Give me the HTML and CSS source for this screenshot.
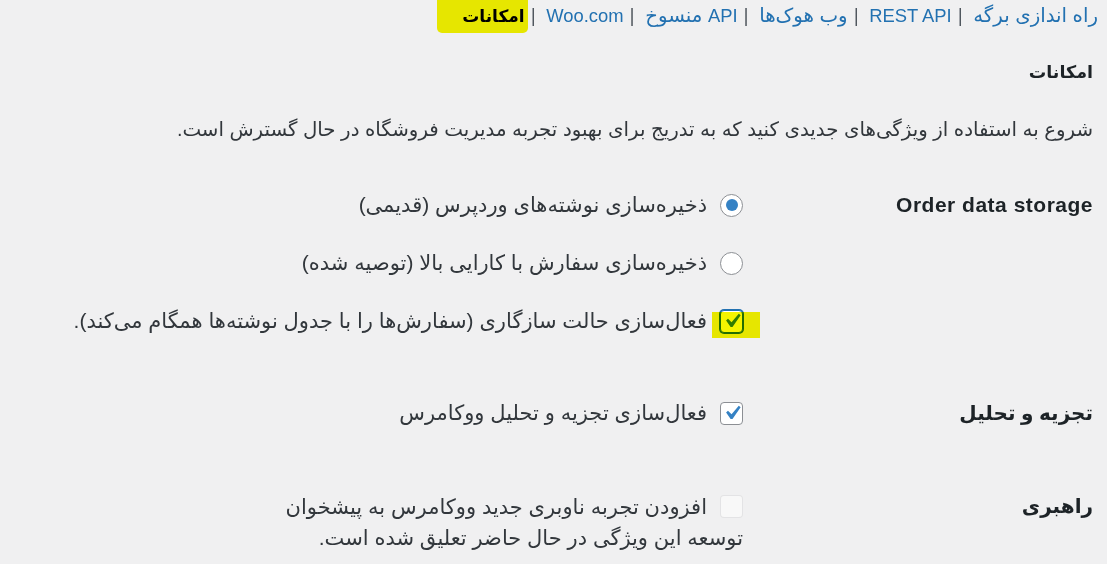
FILE: index.html
```html
<!DOCTYPE html>
<html lang="fa" dir="rtl">
<head>
<meta charset="utf-8">
<title>امکانات</title>
<link rel="stylesheet" href="styles.css">
</head>
<body>
<div class="wrap">
  <ul class="subsubsub">
    <li><a href="#">راه اندازی برگه</a><span class="sep">|</span></li>
    <li><a href="#"><span class="en">REST API</span></a><span class="sep">|</span></li>
    <li><a href="#">وب هوک‌ها</a><span class="sep">|</span></li>
    <li><a href="#"><span class="en">API</span> منسوخ</a><span class="sep">|</span></li>
    <li><a href="#"><span class="en">Woo.com</span></a><span class="sep">|</span></li>
    <li class="current-item"><a href="#" class="current">امکانات</a><span class="marker marker-top"></span></li>
  </ul>

  <h2 class="title">امکانات</h2>
  <p class="intro">شروع به استفاده از ویژگی‌های جدیدی کنید که به تدریج برای بهبود تجربه مدیریت فروشگاه در حال گسترش است.</p>

  <div class="form-table">
    <div class="row row-storage">
      <div class="th th-latin">Order data storage</div>
      <div class="td options">
        <label class="opt"><span class="ctrl radio checked"></span><span class="opt-text">ذخیره‌سازی نوشته‌های وردپرس (قدیمی)</span></label>
        <label class="opt"><span class="ctrl radio"></span><span class="opt-text">ذخیره‌سازی سفارش با کارایی بالا (توصیه شده)</span></label>
        <label class="opt"><span class="ctrl-wrap"><span class="ctrl checkbox checked focused"><svg viewBox="0 0 20 20" class="check"><path d="M14.83 4.89l1.34.94-5.81 8.38H9.02L5.78 9.67l1.34-1.25 2.57 2.4z"/></svg></span><span class="marker marker-check"></span></span><span class="opt-text">فعال‌سازی حالت سازگاری (سفارش‌ها را با جدول نوشته‌ها همگام می‌کند).</span></label>
      </div>
    </div>

    <div class="row row-analytics">
      <div class="th">تجزیه و تحلیل</div>
      <div class="td options">
        <label class="opt"><span class="ctrl checkbox checked"><svg viewBox="0 0 20 20" class="check"><path d="M14.83 4.89l1.34.94-5.81 8.38H9.02L5.78 9.67l1.34-1.25 2.57 2.4z"/></svg></span><span class="opt-text">فعال‌سازی تجزیه و تحلیل ووکامرس</span></label>
      </div>
    </div>

    <div class="row row-nav">
      <div class="th">راهبری</div>
      <div class="td">
        <label class="opt opt-nav"><span class="ctrl checkbox disabled"></span><span class="opt-text">افزودن تجربه ناوبری جدید ووکامرس به پیشخوان</span></label>
        <div class="note">توسعه این ویژگی در حال حاضر تعلیق شده است.</div>
      </div>
    </div>
  </div>
</div>
</body>
</html>
```

FILE: styles.css
```css
* { box-sizing: border-box; }

html, body {
  margin: 0;
  padding: 0;
}

body {
  width: 1107px;
  height: 564px;
  overflow: hidden;
  background: #f0f0f1;
  color: #32373c;
  font-family: "Liberation Sans", "DejaVu Sans", sans-serif;
  font-size: 19.8px;
  direction: rtl;
}

.wrap {
  padding: 0 14px 0 0;
}

.en {
  font-size: 18.4px;
}

/* top sub navigation */
.subsubsub {
  list-style: none;
  margin: 0 -5px 0 0;
  padding: 0;
  height: 30px;
  line-height: 30px;
  font-size: 19.8px;
  color: #50575e;
  white-space: nowrap;
}

.subsubsub li {
  display: inline;
}

.subsubsub a {
  color: #2271b1;
  text-decoration: none;
}

.sep {
  display: inline-block;
  margin: 0 10px 0 0;
  font-family: "DejaVu Sans", sans-serif;
  font-size: 18px;
}

.subsubsub a.current {
  color: #000;
  font-weight: bold;
  font-size: 17px;
}

.current-item {
  position: relative;
}

.marker {
  position: absolute;
  background: #f5f500;
  mix-blend-mode: multiply;
  pointer-events: none;
}

.marker-top {
  right: -3px;
  left: -25px;
  top: -6px;
  bottom: -7px;
  border-radius: 2px 2px 5px 5px;
}

/* heading + intro */
.title {
  margin: 27px 0 0;
  font-size: 17.5px;
  line-height: 30px;
  font-weight: bold;
  color: #1d2327;
}

.intro {
  margin: 27px 0 0;
  line-height: 30px;
}

/* settings table */
.form-table {
  margin-top: 46px;
}

.row {
  display: flex;
  align-items: flex-start;
}

.row-analytics {
  margin-top: 62px;
}

.row-nav {
  margin-top: 63px;
}

.th {
  width: 350px;
  flex: none;
  line-height: 30px;
  font-size: 20px;
  font-weight: bold;
  color: #1d2327;
}

.th-latin {
  font-size: 21px;
  letter-spacing: 0.5px;
}

.td {
  flex: 1;
  min-width: 0;
  font-size: 21px;
}

.options {
  display: flex;
  flex-direction: column;
  gap: 28px;
}

.opt {
  display: flex;
  align-items: center;
  gap: 13px;
  height: 30px;
  white-space: nowrap;
}

.ctrl {
  flex: none;
  width: 23px;
  height: 23px;
  border: 1px solid #8c8f94;
  background: #fff;
  display: flex;
  align-items: center;
  justify-content: center;
}

.radio {
  border-radius: 50%;
}

.radio.checked::before {
  content: "";
  width: 12px;
  height: 12px;
  border-radius: 50%;
  background: #3582c4;
}

.checkbox {
  border-radius: 4px;
}

.check {
  width: 28px;
  height: 28px;
  fill: #3582c4;
  flex: none;
  margin: -2px;
}

.checkbox.focused {
  border-color: #2271b1;
  box-shadow: 0 0 0 1px #2271b1;
}

.ctrl-wrap {
  position: relative;
  display: flex;
  flex: none;
}

.marker-check {
  right: -17px;
  left: -8px;
  top: 2px;
  height: 26px;
}

.checkbox.disabled {
  background: rgba(255, 255, 255, 0.5);
  border-color: rgba(220, 220, 222, 0.75);
}

.opt-nav {
  height: 31px;
}

.note {
  line-height: 31px;
}
```
